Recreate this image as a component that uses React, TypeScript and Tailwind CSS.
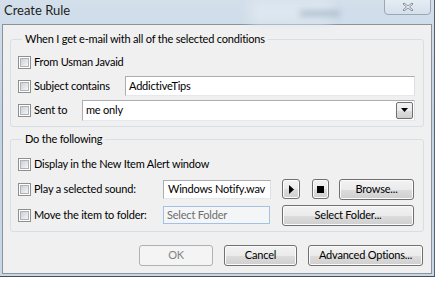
import { ReactNode } from 'react';

const btn =
  'flex items-center justify-center rounded-[3px] border border-[#707070] bg-[linear-gradient(#f2f2f2_0%,#ebebeb_50%,#dddddd_51%,#cfcfcf_100%)] text-black shadow-[inset_0_0_0_1px_#fcfcfc]';

const field =
  'flex items-center whitespace-nowrap border border-[#abadb3] border-r-[#dbdfe6] border-b-[#e3e9ef] bg-white text-black';

function Check({ label, width }: { label: string; width?: string }) {
  return (
    <div className={`flex shrink-0 items-center gap-[3px] ${width ?? ''}`}>
      <span className="h-[13px] w-[13px] shrink-0 border border-[#8e8f8f] bg-white p-[1px]">
        <span className="block h-full w-full border border-[#aeb3b9] bg-[linear-gradient(135deg,#cbcfd5_0%,#f6f6f6_100%)]" />
      </span>
      <span className="whitespace-nowrap text-black">{label}</span>
    </div>
  );
}

function Group({ title, children, className }: { title: string; children: ReactNode; className?: string }) {
  return (
    <fieldset className={`rounded-[3px] border border-[#d5dfe5] pl-[7px] pr-[8px] ${className ?? ''}`}>
      <legend className="ml-[4px] px-[3px] leading-[16px] text-black">{title}</legend>
      {children}
    </fieldset>
  );
}

export default function App() {
  return (
    <div className="h-[281px] w-[437px] overflow-hidden bg-white font-['Lato',sans-serif] text-[11px] tracking-[-0.2px]">
      <div className="relative flex h-[277px] w-[435px] flex-col border-r border-b border-r-[#5a5f66] border-b-[#4a4e54] bg-[linear-gradient(#d3dfeb_0%,#c2d3e5_40%,#c9d8e8_100%)]">
        {/* glass reflections */}
        <div className="absolute left-[250px] top-0 h-[24px] w-[80px] bg-[#dde7f0] blur-[6px]" />
        <div className="absolute left-[300px] top-[11px] h-[5px] w-[40px] bg-[#a9b8c8] blur-[3px]" />

        {/* title bar */}
        <div className="relative h-[24px] shrink-0 pl-[4px] pt-[2px] text-[13px] leading-[16px] tracking-normal text-[#1e1e1e]">
          Create Rule
          <div className="absolute left-[384px] top-[-2px] flex h-[17px] w-[47px] items-center justify-center rounded-b-[4px] border border-[#9aa7b6] bg-[linear-gradient(#e6edf4_0%,#d6e0eb_100%)] pt-[1px]">
            <svg width="12" height="10" viewBox="0 0 12 10">
              <path d="M2 1 L6 4 L10 1 L11 2 L7.5 5 L11 8 L10 9 L6 6 L2 9 L1 8 L4.5 5 L1 2 Z" fill="#f4f6f8" stroke="#7b8694" strokeWidth="0.9" strokeLinejoin="round" />
            </svg>
          </div>
        </div>

        {/* client area */}
        <div className="mb-[2px] ml-[2px] flex w-[430px] flex-1 flex-col border border-[#8a929c] bg-[#f0f0f0] px-[7px] pt-[6px]">
          <Group title="When I get e-mail with all of the selected conditions" className="pb-[4px] pt-[3px]">
            <div className="flex h-[24px] items-center">
              <Check label="From Usman Javaid" />
            </div>
            <div className="flex h-[24px] items-center">
              <Check label="Subject contains" width="w-[107px]" />
              <div className={`${field} h-[20px] flex-1 pl-[3px]`}>AddictiveTips</div>
            </div>
            <div className="flex h-[24px] items-center">
              <Check label="Sent to" width="w-[64px]" />
              <div className={`${field} h-[21px] flex-1 justify-between pl-[3px] pr-[1px]`}>
                <span>me only</span>
                <span className="flex h-[17px] w-[17px] items-center justify-center rounded-[2px] border border-[#707070] bg-[linear-gradient(#f2f2f2_0%,#ebebeb_50%,#dddddd_51%,#cfcfcf_100%)]">
                  <svg width="7" height="4" viewBox="0 0 7 4">
                    <path d="M0 0 H7 L3.5 4 Z" fill="#000" />
                  </svg>
                </span>
              </div>
            </div>
          </Group>

          <Group title="Do the following" className="mt-[4px] pb-[3px] pt-[5px]">
            <div className="flex h-[24px] items-center">
              <Check label="Display in the New Item Alert window" />
            </div>
            <div className="flex h-[26px] items-center">
              <Check label="Play a selected sound:" width="w-[145px]" />
              <div className={`${field} h-[19px] w-[108px] pl-[4px]`}>Windows Notify.wav</div>
              <button className={`${btn} ml-[11px] h-[20px] w-[18px]`}>
                <svg width="5" height="9" viewBox="0 0 5 9">
                  <path d="M0 0 L5 4.5 L0 9 Z" fill="#000" />
                </svg>
              </button>
              <button className={`${btn} ml-[12px] h-[20px] w-[17px]`}>
                <span className="block h-[7px] w-[7px] bg-black" />
              </button>
              <button className={`${btn} ml-[10px] h-[21px] w-[75px]`}>Browse...</button>
            </div>
            <div className="flex h-[26px] items-center">
              <Check label="Move the item to folder:" width="w-[145px]" />
              <div className="flex h-[18px] w-[107px] items-center whitespace-nowrap border border-[#a2c1e4] bg-[#f4f5f6] pl-[3px] text-[#6d6d6d]">
                Select Folder
              </div>
              <button className={`${btn} ml-[12px] h-[21px] w-[132px]`}>Select Folder...</button>
            </div>
          </Group>

          <div className="mt-[13px] flex justify-end gap-[11px] pr-[1px]">
            <button className="flex h-[21px] w-[74px] items-center justify-center rounded-[3px] border border-[#adb2b5] bg-[#f4f4f4] text-[#838383]">
              OK
            </button>
            <button className={`${btn} h-[21px] w-[73px]`}>Cancel</button>
            <button className={`${btn} h-[21px] w-[115px]`}>Advanced Options...</button>
          </div>
        </div>
      </div>
    </div>
  );
}
